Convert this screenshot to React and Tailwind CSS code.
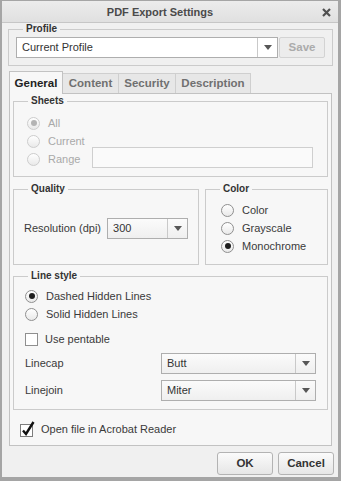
import React from 'react';

const Radio = ({ checked, disabled }) => (
  <span
    className={`flex h-[13px] w-[13px] shrink-0 items-center justify-center rounded-full border bg-gradient-to-b from-white to-[#e9e9e9] ${
      disabled ? 'border-[#cdcdcd]' : 'border-[#8f8f8f]'
    }`}
  >
    {checked && (
      <span className={`h-[6px] w-[6px] rounded-full ${disabled ? 'bg-[#b4b4b4]' : 'bg-[#1e1e1e]'}`} />
    )}
  </span>
);

const RadioRow = ({ label, checked, disabled }) => (
  <div className="flex h-[18px] items-center gap-[8px]">
    <Radio checked={checked} disabled={disabled} />
    <span className={disabled ? 'text-[#a9a9a9]' : 'text-[#3a3a3a]'}>{label}</span>
  </div>
);

const Arrow = () => (
  <span className="flex h-full w-[20px] items-center justify-center border-l border-[#c9c9c9]">
    <svg width="8" height="5" viewBox="0 0 8 5">
      <path d="M0 0h8L4 5z" fill="#575757" />
    </svg>
  </span>
);

const Select = ({ value, className = '', white }) => (
  <div
    className={`flex h-[21px] items-center border border-[#aeaeae] ${
      white ? 'bg-white' : 'bg-gradient-to-b from-[#fbfbfb] to-[#efefef]'
    } ${className}`}
  >
    <span className="flex-1 pl-[5px] text-[#333]">{value}</span>
    <Arrow />
  </div>
);

// group box: fieldset keeps the legend on the border, padding goes on the inner div
const Group = ({ title, className = '', inner = '', children }) => (
  <fieldset className={`border border-[#cbcbcb] p-0 ${className}`}>
    <legend className="ml-[14px] px-[3px] text-[10px] leading-[12px] font-bold text-[#333]">{title}</legend>
    <div className={inner}>{children}</div>
  </fieldset>
);

export default function App() {
  return (
    <div
      className="flex h-[481px] w-[341px] flex-col border-t border-l-2 border-r-[3px] border-b-[4px] border-[#a5a5a5] bg-[#f0f0f0] text-[11px] leading-[13px] text-[#3a3a3a]"
      style={{ fontFamily: '"Liberation Sans", Arial, sans-serif' }}
    >
      {/* Title bar */}
      <div className="flex h-[22px] shrink-0 items-center border-b border-[#c6c6c6] bg-gradient-to-b from-[#ececec] to-[#e0e0e0] pt-[2px]">
        <span className="flex-1 text-center text-[11px] font-bold text-[#4a4a4a]">PDF Export Settings</span>
        <span className="flex w-[20px] items-center justify-center pr-[3px]">
          <svg width="9" height="9" viewBox="0 0 9 9">
            <path d="M1 1l7 7M8 1l-7 7" stroke="#505050" strokeWidth="2.2" />
          </svg>
        </span>
      </div>

      {/* Profile */}
      <Group title="Profile" className="ml-[6px] mr-[5px]" inner="flex items-center gap-[1px] px-[7px] pb-[7px] pt-[2px]">
        <Select value="Current Profile" white className="flex-1" />
        <button className="h-[21px] w-[46px] rounded-[2px] border border-[#d3d3d3] bg-[#ececec] text-[11.5px] font-bold text-[#ababab]">
          Save
        </button>
      </Group>

      {/* Tabs */}
      <div className="mx-[7px] mt-[5px] flex items-end text-[11.5px] font-bold">
        <div className="relative z-10 -mb-px flex h-[23px] w-[54px] items-center justify-center border border-b-0 border-[#c2c2c2] bg-[#f7f7f7] text-[#222]">
          General
        </div>
        {['Content', 'Security', 'Description'].map((t, i) => (
          <div
            key={t}
            className={`flex h-[20px] items-center justify-center border border-l-0 border-b-0 border-[#cfcfcf] bg-[#e7e7e7] text-[#707070] ${
              i === 0 ? 'w-[56px]' : i === 1 ? 'w-[57px]' : 'w-[75px]'
            }`}
          >
            {t}
          </div>
        ))}
      </div>

      {/* Tab panel */}
      <div className="mx-[7px] mr-[6px] flex h-[353px] flex-col border border-[#c2c2c2] bg-[#f7f7f7] px-[3px]">
        <Group title="Sheets" className="mt-[1px] h-[82px]" inner="pl-[13px] pr-[14px] pt-[7px]">
          <RadioRow label="All" checked disabled />
          <RadioRow label="Current" disabled />
          <div className="flex items-center">
            <div className="w-[65px]">
              <RadioRow label="Range" disabled />
            </div>
            <div className="-mt-[4px] h-[21px] flex-1 border border-[#cfcfcf] bg-[#fafafa]" />
          </div>
        </Group>

        <div className="mt-[6px] flex gap-[6px]">
          <Group title="Quality" className="h-[82px] w-[186px]" inner="flex h-[64px] items-center gap-[6px] px-[10px] pt-[2px]">
            <span className="text-[#3a3a3a]">Resolution (dpi)</span>
            <Select value="300" className="flex-1" />
          </Group>
          <Group title="Color" className="h-[82px] flex-1" inner="pl-[15px] pt-[6px]">
            <RadioRow label="Color" />
            <RadioRow label="Grayscale" />
            <RadioRow label="Monochrome" checked />
          </Group>
        </div>

        <Group title="Line style" className="mt-[5px] h-[140px]" inner="pl-[11px] pr-[11px] pt-[5px]">
          <RadioRow label="Dashed Hidden Lines" checked />
          <RadioRow label="Solid Hidden Lines" />
          <div className="mt-[9px] flex h-[14px] items-center gap-[7px]">
            <span className="h-[13px] w-[13px] border border-[#8f8f8f] bg-white" />
            <span>Use pentable</span>
          </div>
          <div className="mt-[7px] flex items-center">
            <span className="w-[136px]">Linecap</span>
            <Select value="Butt" className="flex-1" />
          </div>
          <div className="mt-[6px] flex items-center">
            <span className="w-[136px]">Linejoin</span>
            <Select value="Miter" className="flex-1" />
          </div>
        </Group>

        <div className="mt-[11px] flex items-center gap-[6px] pl-[7px]">
          <svg width="15" height="16" viewBox="0 0 15 16" className="shrink-0">
            <rect x="0.5" y="3.5" width="12" height="12" fill="white" stroke="#7d7d7d" />
            <path d="M3 9.5l3 3.5L13.5 1" fill="none" stroke="#111" strokeWidth="2.4" />
          </svg>
          <span>Open file in Acrobat Reader</span>
        </div>
      </div>

      {/* Buttons */}
      <div className="mr-[4px] mt-[6px] flex justify-end gap-[5px] text-[11.5px] font-bold">
        <button className="h-[23px] w-[56px] rounded-[3px] border border-[#b3b3b3] bg-gradient-to-b from-[#fbfbfb] to-[#e6e6e6] text-[#333]">
          OK
        </button>
        <button className="h-[23px] w-[56px] rounded-[3px] border border-[#b3b3b3] bg-gradient-to-b from-[#fbfbfb] to-[#e6e6e6] text-[#333]">
          Cancel
        </button>
      </div>
    </div>
  );
}
